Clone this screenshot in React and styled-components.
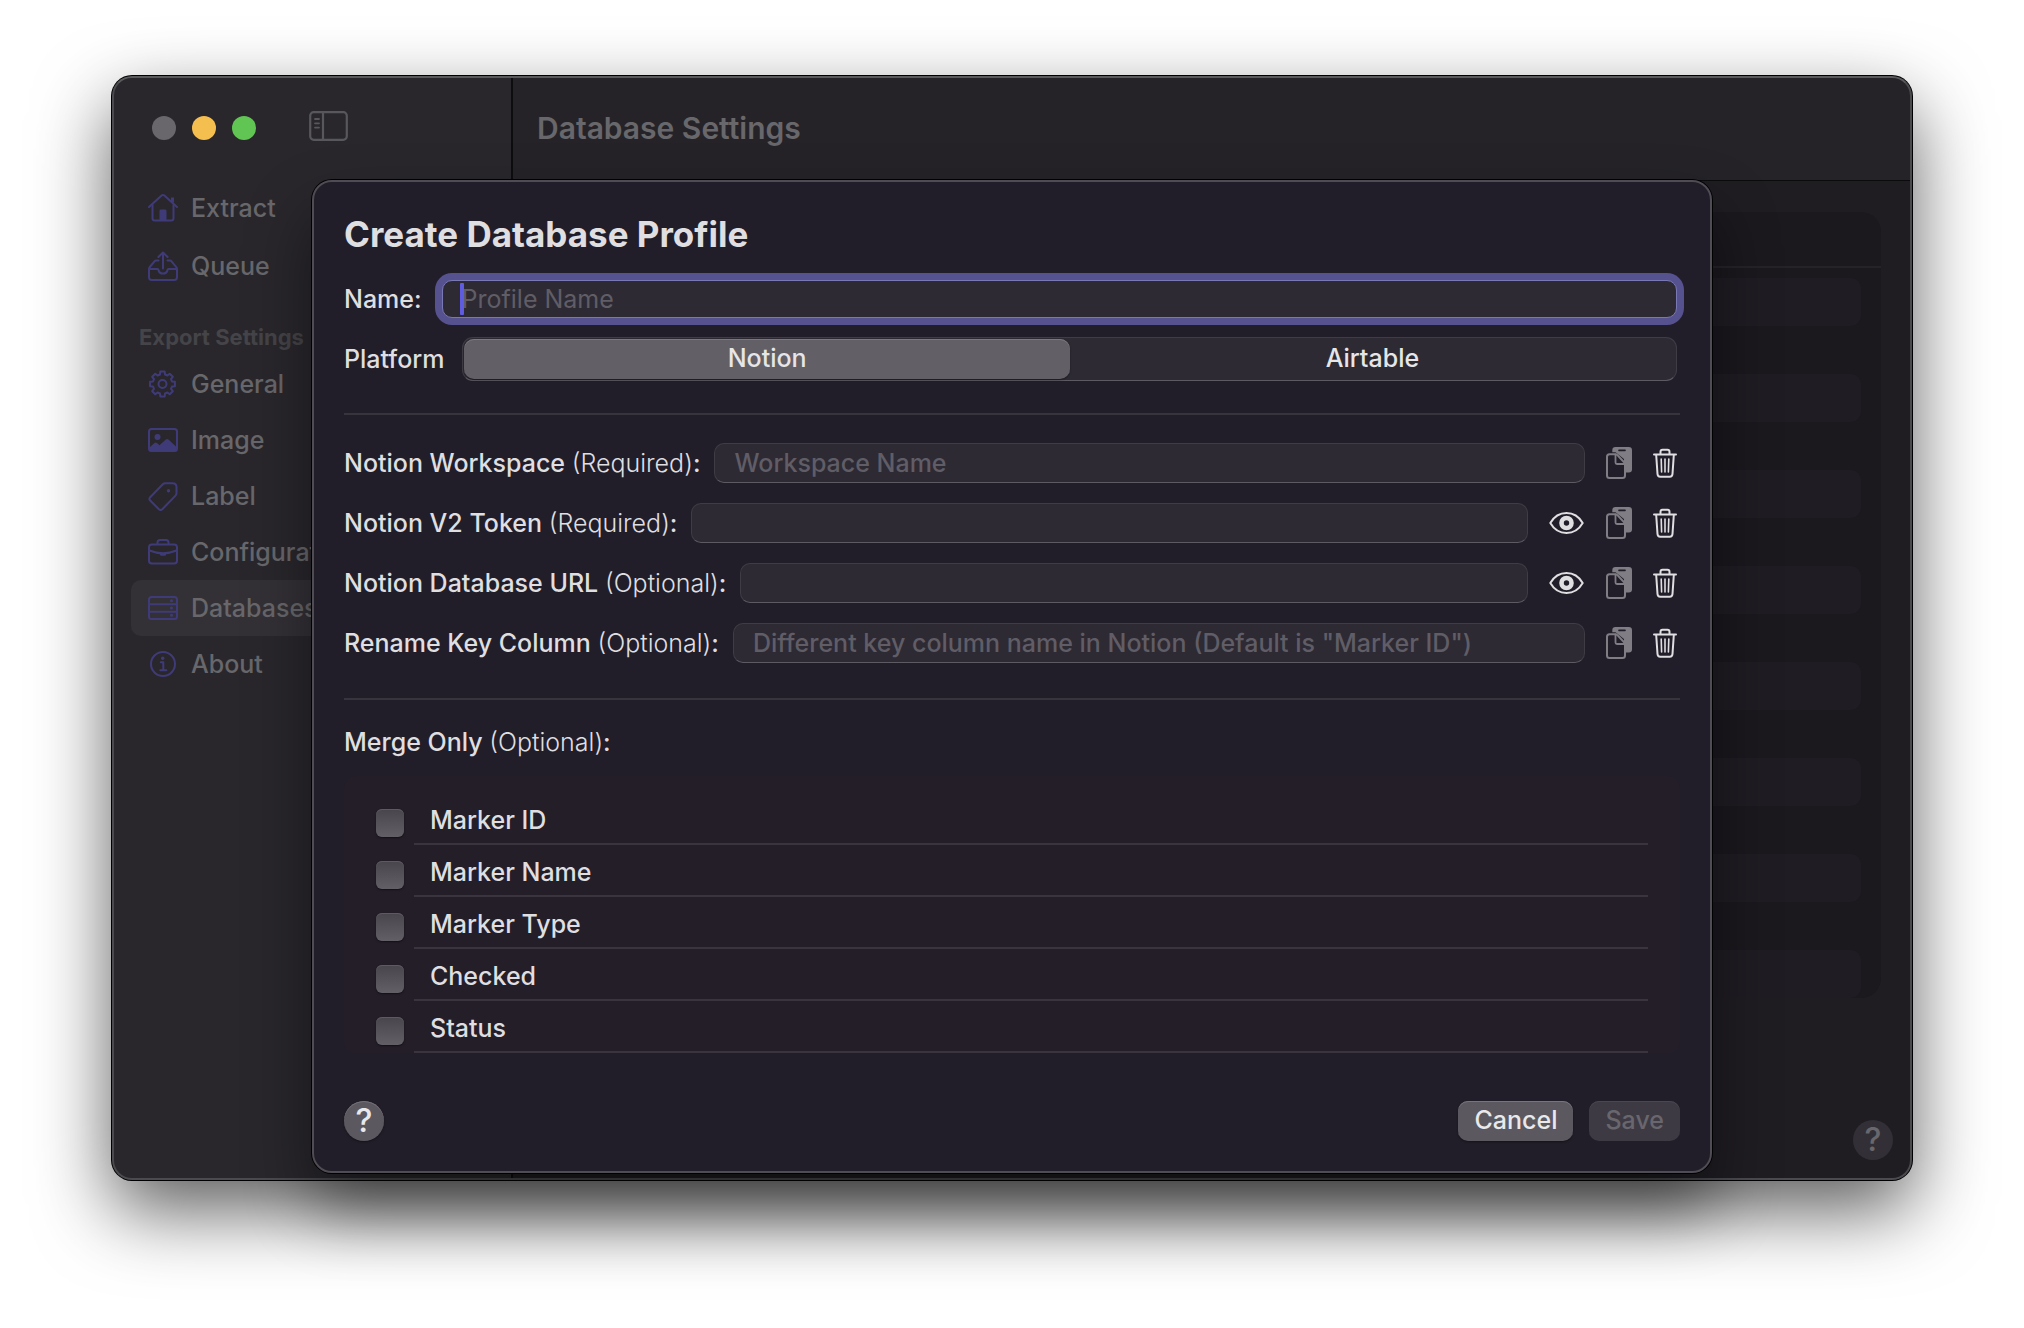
import React from "react";
import styled, { createGlobalStyle, css } from "styled-components";

const color = {
  sidebar: "#29272c",
  toolbar: "#252328",
  content: "#1f1d22",
  table: "#1b181e",
  stripe: "#1f1c23",
  sheet: "#221e29",
  field: "#2d2a34",
  line: "#37343e",
  text: "#dfdee0",
  dimText: "#68676b",
  accent: "#3f3b78",
  placeholder: "#605d66",
};

const GlobalStyle = createGlobalStyle`
  *, *::before, *::after { box-sizing: border-box; }
  body {
    margin: 0;
    background: #fff;
    font-family: Inter, "Liberation Sans", sans-serif;
    font-size: 25px;
    line-height: 32px;
    color: ${color.text};
  }
  button, input { font: inherit; color: inherit; }
  h1, h2, p, ul, fieldset { margin: 0; padding: 0; border: 0; }
  ul { list-style: none; }
`;

const Desktop = styled.div`
  min-height: 100vh;
  display: flex;
  padding: 76px 112px 148px;
`;

const Window = styled.div`
  position: relative;
  flex: 1;
  min-width: 0;
  display: flex;
  border: 2px solid #4b4a4f;
  border-top-color: #5a5a5c;
  border-radius: 20px;
  background: #4b4a4f;
  box-shadow: 0 0 0 1px #000, 0 30px 76px rgba(0, 0, 0, 0.64);
`;

/* Sidebar */

const Sidebar = styled.aside`
  width: 399px;
  flex: none;
  background: ${color.sidebar};
  border-right: 2px solid #0d0c0f;
  border-radius: 18px 0 0 18px;
`;

const SidebarHead = styled.div`
  display: flex;
  align-items: center;
  height: 100px;
  padding-left: 38px;
  gap: 53px;
`;

const Lights = styled.div`
  display: flex;
  gap: 16px;
`;

const Light = styled.button`
  width: 24px;
  height: 24px;
  padding: 0;
  border: 0;
  border-radius: 50%;
  background: ${(p) => p.$tone};
`;

const PlainButton = styled.button`
  display: flex;
  flex: none;
  padding: 0;
  border: 0;
  background: none;
  color: ${(p) => p.$tone || color.text};
  svg { display: block; }
`;

const ToggleButton = styled(PlainButton)`
  padding-bottom: 4px;
`;

const Nav = styled.nav`
  padding: 2px 19px 0 17px;
`;

const NavGroup = styled.ul`
  display: flex;
  flex-direction: column;
  gap: ${(p) => p.$gap || 0}px;
`;

const NavHeading = styled.h2`
  padding: 28px 8px 4px;
  font-size: 22px;
  line-height: 30px;
  font-weight: 700;
  color: #454448;
  white-space: nowrap;
`;

const NavLink = styled.a`
  display: flex;
  align-items: center;
  gap: 13px;
  height: 56px;
  padding-left: 17px;
  border-radius: 10px;
  color: ${color.dimText};
  font-weight: 500;
  text-decoration: none;
  background: ${(p) => (p.$active ? "#333136" : "transparent")};
  svg { flex: none; color: ${color.accent}; }
`;

/* Main pane */

const Main = styled.main`
  flex: 1;
  min-width: 0;
  display: flex;
  flex-direction: column;
`;

const Toolbar = styled.header`
  display: flex;
  align-items: center;
  height: 103px;
  padding: 0 24px 2px;
  background: ${color.toolbar};
  border-bottom: 1px solid #0b0a0c;
  border-radius: 0 18px 0 0;
`;

const ToolbarTitle = styled.h1`
  font-size: 30px;
  line-height: 36px;
  font-weight: 600;
  color: ${color.dimText};
`;

const Content = styled.section`
  flex: 1;
  display: flex;
  flex-direction: column;
  justify-content: space-between;
  align-items: flex-end;
  padding: 31px 17px 18px 31px;
  background: ${color.content};
  border-radius: 0 0 18px 0;
`;

const ProfileList = styled.div`
  align-self: stretch;
  margin-right: 12px;
  border-radius: 20px;
  background: ${color.table};
  overflow: hidden;
`;

const ProfileListHead = styled.div`
  height: 56px;
  border-bottom: 2px solid #252328;
`;

const ProfileRows = styled.ul`
  padding: 10px 20px 0;
`;

const ProfileRow = styled.li`
  height: 48px;
  border-radius: 10px;
  &:nth-child(odd) { background: ${color.stripe}; }
`;

const HelpButton = styled.button`
  width: 40px;
  height: 40px;
  padding: 0;
  border: 0;
  border-radius: 50%;
  font-size: 32px;
  line-height: 40px;
  font-weight: 500;
  ${(p) =>
    p.$dim
      ? css`
          background: #323036;
          color: #69676c;
        `
      : css`
          background: #5b5860;
          color: #e9e8ea;
          box-shadow: inset 0 1px 0 #747178, 0 1px 2px rgba(0, 0, 0, 0.4);
        `}
`;

/* Sheet */

const SheetLayer = styled.div`
  position: absolute;
  inset: 0;
  padding: 102px 198px 0;
`;

const Sheet = styled.form`
  padding: 32px 30px 30px;
  border: 2px solid #4f4c54;
  border-radius: 20px;
  background: ${color.sheet};
  box-shadow: 0 0 0 1px #000, 0 36px 66px rgba(0, 0, 0, 0.46);
`;

const SheetTitle = styled.h2`
  font-size: 35px;
  line-height: 40px;
  font-weight: 700;
`;

const FormRow = styled.div`
  display: flex;
  align-items: center;
  gap: ${(p) => p.$gap || 21}px;
  margin-top: ${(p) => p.$top}px;
  padding-right: 3px;
  border: 0;
`;

const Caption = styled.span`
  white-space: nowrap;
  font-weight: 500;
  em {
    font-style: normal;
    font-weight: 300;
  }
`;

const TextInput = styled.input`
  flex: 1;
  min-width: 0;
  width: 100%;
  height: 40px;
  padding: 0 19px;
  border: 1px solid #3f3c45;
  border-bottom-color: #5d5a63;
  border-radius: 10px;
  background: ${color.field};
  font-weight: 500;
  outline: none;
  &::placeholder { color: ${color.placeholder}; opacity: 1; }
`;

const FocusedField = styled.div`
  position: relative;
  flex: 1;
  display: flex;
  ${TextInput} {
    height: 38px;
    border-color: #7a78b4;
    font-weight: 400;
    box-shadow: 0 0 0 7px #56528f;
  }
  &::after {
    content: "";
    position: absolute;
    left: 18px;
    top: 3px;
    width: 4px;
    height: 32px;
    border-radius: 1px;
    background: #5f5ce0;
  }
`;

const Segments = styled.div`
  flex: 1;
  display: flex;
  height: 44px;
  padding: 1px;
  border: 1px solid #3f3c45;
  border-bottom-color: #5d5a63;
  border-radius: 11px;
  background: ${color.field};
`;

const Segment = styled.label`
  position: relative;
  flex: 1;
  display: flex;
  align-items: center;
  justify-content: center;
  padding-bottom: 2px;
  border-radius: 10px;
  color: #e6e5e7;
  font-weight: 500;
  &:has(input:checked) {
    background: #625f66;
    box-shadow: inset 0 1px 0 #7b787f, 0 1px 2px rgba(0, 0, 0, 0.4);
  }
  input {
    appearance: none;
    position: absolute;
    inset: 0;
    margin: 0;
  }
`;

const Separator = styled.hr`
  height: 2px;
  margin: ${(p) => p.$top}px 0 ${(p) => p.$bottom}px;
  border: 0;
  background: ${color.line};
`;

const FieldStack = styled.div`
  display: flex;
  flex-direction: column;
  gap: 20px;
`;

const FieldLabel = styled.label`
  flex: 1;
  min-width: 0;
  display: flex;
  align-items: center;
  gap: 14px;
`;

const MergeFields = styled.fieldset`
  min-width: 0;
`;

const MergeCaption = styled.legend`
  padding: 0;
  margin-bottom: 18px;
  font-weight: 500;
  em {
    font-style: normal;
    font-weight: 300;
  }
`;

const MergeList = styled.ul`
  padding: 17px 32px 0;
  border-radius: 12px;
  background: #241e29;
`;

const MergeItem = styled.li`
  display: flex;
  align-items: flex-end;
  gap: 10px;
  label {
    flex: 1;
    height: 52px;
    padding: 4px 16px 0;
    border-bottom: 2px solid #39343e;
    line-height: 46px;
    font-weight: 500;
  }
`;

const Checkbox = styled.input`
  appearance: none;
  width: 28px;
  height: 28px;
  margin: 0 0 8px;
  border-radius: 6px;
  background: linear-gradient(#48454c, #625f67);
  box-shadow: inset 0 1px 0 #5d5a62, 0 1px 2px rgba(0, 0, 0, 0.5);
`;

const SheetFooter = styled.footer`
  display: flex;
  justify-content: space-between;
  margin-top: 48px;
`;

const Actions = styled.div`
  display: flex;
  gap: 16px;
`;

const PushButton = styled.button`
  height: 40px;
  padding: 0 16px 2px;
  border: 0;
  border-radius: 10px;
  background: #5b5860;
  color: #e9e8ea;
  font-weight: 500;
  box-shadow: inset 0 1px 0 #77747b, 0 1px 2px rgba(0, 0, 0, 0.4);
  &:disabled {
    background: #3d3a43;
    color: #69666e;
    box-shadow: inset 0 1px 0 #4a474f;
  }
`;

/* Icons */

function Icon({ w = 30, h = 30, sw = 2, children }) {
  return (
    <svg
      width={w}
      height={h}
      viewBox={`0 0 ${w} ${h}`}
      fill="none"
      stroke="currentColor"
      strokeWidth={sw}
      strokeLinecap="round"
      strokeLinejoin="round"
      aria-hidden="true"
    >
      {children}
    </svg>
  );
}

const SidebarToggleIcon = () => (
  <Icon w={40} h={30}>
    <rect x="1.2" y="1.2" width="36.6" height="27.6" rx="3.5" strokeWidth="2.2" />
    <path d="M14 1.5v27" strokeWidth="2.2" strokeLinecap="butt" />
    <path d="M6 8h4M6 12.3h4M6 16.6h4" strokeWidth="1.8" />
  </Icon>
);

const HouseIcon = () => (
  <Icon>
    <path d="M1 14 13.6 2.6Q15 1.4 16.4 2.6L29 14" />
    <path d="M4.5 12v13.2q0 2.3 2.3 2.3h16.4q2.3 0 2.3-2.3V12" />
    <path d="M24.500 4.500v5" strokeWidth="3" strokeLinecap="butt" />
    <path d="M11.500 27v-9q0-1.400 1.400-1.400h4.200q1.400 0 1.400 1.400v9z" fill="currentColor" stroke="none" />
  </Icon>
);

const TrayIcon = () => (
  <Icon>
    <path d="M15 17.5V1.8M10.4 6 15 1.5 19.6 6" />
    <path d="M10.5 9.5H8.2q-1 0-1.7.8L1.8 16Q1 17 1 18.3v8q0 2.7 2.7 2.7h22.6q2.7 0 2.7-2.7v-8q0-1.3-.8-2.3l-4.7-5.7q-.7-.8-1.7-.8h-2.3" />
    <path d="M1.3 18h8q1 0 1.2 1 .6 3.6 4.5 3.6t4.5-3.6q.2-1 1.2-1h8" />
  </Icon>
);

const GearIcon = () => {
  const teeth = [];
  for (let i = 0; i < 8; i += 1) {
    [[-15, 9.8], [-10, 12.6], [10, 12.6], [15, 9.8]].forEach(([offset, radius]) => {
      const a = ((i * 45 + offset) * Math.PI) / 180;
      teeth.push(`${(14.5 + radius * Math.sin(a)).toFixed(2)} ${(15 - radius * Math.cos(a)).toFixed(2)}`);
    });
  }
  return (
    <Icon>
      <path d={`M${teeth.join("L")}Z`} />
      <circle cx="14.5" cy="15" r="4" />
    </Icon>
  );
};

const PhotoIcon = () => (
  <Icon>
    <rect x="1" y="4" width="28" height="22" rx="2.5" />
    <circle cx="9.5" cy="12" r="3" fill="currentColor" stroke="none" />
    <path d="M1.5 22.5 6.5 18q1.2-1 2.4 0l2.6 2.3 6.3-5.7q1.3-1.1 2.6 0l8.1 7.5V25q0 1.5-1.5 1.5H3Q1.5 26.5 1.5 25z" fill="currentColor" stroke="none" />
  </Icon>
);

const TagIcon = () => (
  <Icon>
    <path d="M17.2 2.3h7.3q4 0 4 4v6q0 1.3-1 2.3L14.3 28.3q-1.8 1.5-3.4 0L2.2 19.5q-1.5-1.6 0-3.3L14.8 3.3q1-1 2.4-1z" />
    <circle cx="20.5" cy="9.8" r="1.7" fill="currentColor" stroke="none" />
  </Icon>
);

const BriefcaseIcon = () => (
  <Icon>
    <rect x="1" y="7.5" width="28" height="19" rx="2.8" />
    <path d="M9.5 7V5.5q0-2.5 2.5-2.5h6q2.5 0 2.5 2.500V7" />
    <path d="M1.5 13.5Q8 16.2 15 16.2t13.5-2.7" />
    <path d="M11.5 16h7v.8q0 2-2 2h-3q-2 0-2-2z" fill="currentColor" stroke="none" />
  </Icon>
);

const ServerIcon = () => (
  <Icon>
    <rect x="1" y="4" width="28" height="22" rx="2.5" />
    <path d="M1 11.3h28M1 18.7h28" />
    <g fill="currentColor" stroke="none">
      <circle cx="23.5" cy="7.800" r="1.5" />
      <circle cx="23.5" cy="15" r="1.5" />
      <circle cx="23.5" cy="22.2" r="1.5" />
    </g>
  </Icon>
);

const InfoIcon = () => (
  <Icon>
    <circle cx="15" cy="15" r="12" />
    <circle cx="14.7" cy="9.2" r="1.7" fill="currentColor" stroke="none" />
    <path d="M12.8 13.3h2.5v7.7M12.3 21.3h6" />
  </Icon>
);

const EyeIcon = () => (
  <Icon w={36} h={24}>
    <path d="M1.3 12C4.5 6.5 10.5 2 17.5 2s13 4.5 16.2 10C30.5 17.5 24.5 22 17.5 22S4.5 17.5 1.3 12z" />
    <circle cx="17.5" cy="12" r="5" strokeWidth="4.6" />
  </Icon>
);

const PasteIcon = () => (
  <Icon w={26} h={32}>
    <path d="M9.5 0h13.3Q26 0 26 3.2v19.300q0 3-3.200 3H18V12L9.500 5.200H6.300v-2Q6.300 0 9.500 0z" fill="currentColor" stroke="none" />
    <path d="M13 3.4h6" stroke={color.sheet} strokeWidth="1.6" />
    <path d="M3.5 7.2h5.700q1.300 0 2.200.9l6.700 7.200q.9.900.9 2.200v11q0 2.500-2.500 2.500h-13Q1 31 1 28.500V9.700Q1 7.200 3.500 7.200z" fill={color.sheet} />
    <path d="M9.500 7.500v8q0 1.500 1.500 1.500h7.500" strokeWidth="1.800" />
  </Icon>
);

const TrashIcon = () => (
  <Icon w={24} h={30}>
    <path d="M1 6.5h22" />
    <path d="M7.5 6V3.8q0-2 2-2h5q2 0 2 2V6" />
    <path d="M3.2 7 4.5 26q.2 2.7 2.7 2.7h9.600q2.500 0 2.700-2.700L20.800 7" />
    <path d="M8.2 11 8.6 24M12 11v13M15.8 11l-.4 13" strokeWidth="1.6" />
  </Icon>
);

/* Data */

const primaryNav = [
  { label: "Extract", Glyph: HouseIcon },
  { label: "Queue", Glyph: TrayIcon },
];

const settingsNav = [
  { label: "General", Glyph: GearIcon },
  { label: "Image", Glyph: PhotoIcon },
  { label: "Label", Glyph: TagIcon },
  { label: "Configuration", Glyph: BriefcaseIcon },
  { label: "Databases", Glyph: ServerIcon, active: true },
  { label: "About", Glyph: InfoIcon },
];

const notionFields = [
  { name: "Notion Workspace", hint: "(Required)", placeholder: "Workspace Name" },
  { name: "Notion V2 Token", hint: "(Required)", secret: true },
  { name: "Notion Database URL", hint: "(Optional)", secret: true },
  {
    name: "Rename Key Column",
    hint: "(Optional)",
    placeholder: 'Different key column name in Notion (Default is "Marker ID")',
  },
];

const mergeOptions = ["Marker ID", "Marker Name", "Marker Type", "Checked", "Status"];

const NavItems = ({ items, gap }) => (
  <NavGroup $gap={gap}>
    {items.map(({ label, Glyph, active }) => (
      <li key={label}>
        <NavLink href="#" $active={active}>
          <Glyph />
          {label}
        </NavLink>
      </li>
    ))}
  </NavGroup>
);

const NotionField = ({ name, hint, placeholder, secret }) => (
  <FormRow $top={0}>
    <FieldLabel>
      <Caption>
        {name} <em>{hint}</em>:
      </Caption>
      <TextInput type={secret ? "password" : "text"} placeholder={placeholder} />
    </FieldLabel>
    {secret && (
      <PlainButton type="button" aria-label="Reveal">
        <EyeIcon />
      </PlainButton>
    )}
    <PlainButton type="button" aria-label="Paste" $tone="#807d85">
      <PasteIcon />
    </PlainButton>
    <PlainButton type="button" aria-label="Clear">
      <TrashIcon />
    </PlainButton>
  </FormRow>
);

export default function App() {
  return (
    <>
      <GlobalStyle />
      <Desktop>
        <Window>
          <Sidebar>
            <SidebarHead>
              <Lights>
                <Light $tone="#69676c" aria-label="Close" />
                <Light $tone="#f5bf4f" aria-label="Minimize" />
                <Light $tone="#61c554" aria-label="Zoom" />
              </Lights>
              <ToggleButton $tone="#58575b" aria-label="Toggle sidebar">
                <SidebarToggleIcon />
              </ToggleButton>
            </SidebarHead>
            <Nav>
              <NavItems items={primaryNav} gap={2} />
              <NavHeading>Export Settings</NavHeading>
              <NavItems items={settingsNav} />
            </Nav>
          </Sidebar>

          <Main>
            <Toolbar>
              <ToolbarTitle>Database Settings</ToolbarTitle>
            </Toolbar>
            <Content>
              <ProfileList>
                <ProfileListHead />
                <ProfileRows>
                  {Array.from({ length: 15 }, (_, i) => (
                    <ProfileRow key={i} />
                  ))}
                </ProfileRows>
              </ProfileList>
              <HelpButton $dim>?</HelpButton>
            </Content>
          </Main>

          <SheetLayer>
            <Sheet onSubmit={(e) => e.preventDefault()}>
              <SheetTitle>Create Database Profile</SheetTitle>

              <FormRow $top={26} $gap={20}>
                <Caption as="label" htmlFor="profile-name">Name:</Caption>
                <FocusedField>
                  <TextInput id="profile-name" type="text" placeholder="Profile Name" />
                </FocusedField>
              </FormRow>

              <FormRow $top={19} $gap={18} role="radiogroup" aria-labelledby="platform-caption">
                <Caption id="platform-caption">Platform</Caption>
                <Segments>
                  <Segment>
                    <input type="radio" name="platform" defaultChecked />
                    Notion
                  </Segment>
                  <Segment>
                    <input type="radio" name="platform" />
                    Airtable
                  </Segment>
                </Segments>
              </FormRow>

              <Separator $top={32} $bottom={28} />

              <FieldStack>
                {notionFields.map((field) => (
                  <NotionField key={field.name} {...field} />
                ))}
              </FieldStack>

              <Separator $top={35} $bottom={26} />

              <MergeFields>
                <MergeCaption>
                  Merge Only <em>(Optional)</em>:
                </MergeCaption>
                <MergeList>
                  {mergeOptions.map((option, i) => (
                    <MergeItem key={option}>
                      <Checkbox type="checkbox" id={`merge-${i}`} />
                      <label htmlFor={`merge-${i}`}>{option}</label>
                    </MergeItem>
                  ))}
                </MergeList>
              </MergeFields>

              <SheetFooter>
                <HelpButton type="button">?</HelpButton>
                <Actions>
                  <PushButton type="button">Cancel</PushButton>
                  <PushButton type="submit" disabled>Save</PushButton>
                </Actions>
              </SheetFooter>
            </Sheet>
          </SheetLayer>
        </Window>
      </Desktop>
    </>
  );
}
